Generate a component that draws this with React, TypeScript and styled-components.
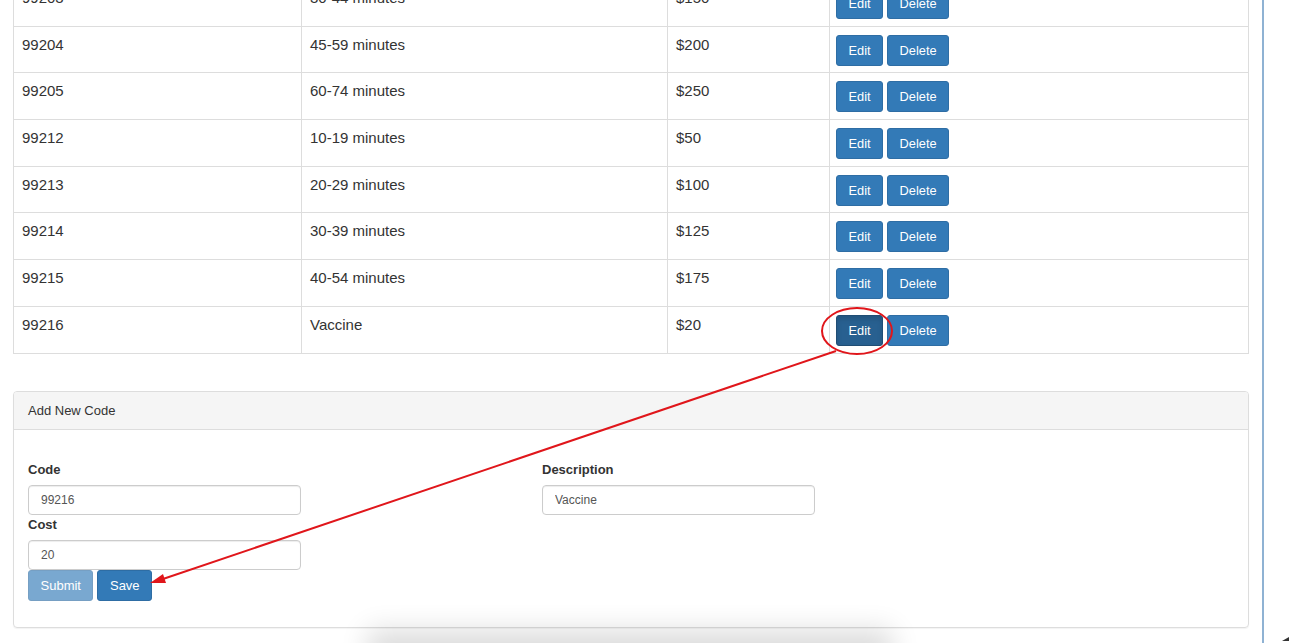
import React from "react";
import styled, { createGlobalStyle } from "styled-components";

const Global = createGlobalStyle`
  html, body { margin: 0; padding: 0; background: #fff; }
  body { font-family: "Liberation Sans", Arial, sans-serif; color: #333; }
  * { box-sizing: border-box; }
`;

const Page = styled.div`
  position: relative;
  width: 1289px;
  height: 643px;
  overflow: hidden;
  display: flex;
  align-items: flex-start;
`;

const Main = styled.div`
  width: 1236px;
  margin-left: 13px;
  margin-top: -21px;
  display: flex;
  flex-direction: column;
  gap: 37px;
`;

const SideRule = styled.div`
  width: 2px;
  height: 643px;
  margin-left: 13px;
  background: #8fb2d3;
`;

const Table = styled.table`
  width: 100%;
  border-collapse: collapse;
  table-layout: fixed;
  font-size: 15px;
`;

const Td = styled.td<{ $w?: number }>`
  border: 1px solid #ddd;
  height: 46.7px;
  padding: 8px 8px 0;
  vertical-align: top;
  line-height: 20px;
  width: ${(p) => (p.$w ? `${p.$w}px` : "auto")};
`;

const Actions = styled.div`
  display: flex;
  gap: 4px;
  margin-left: -2px;
`;

const Btn = styled.button<{ $active?: boolean; $disabled?: boolean; $size?: "sm" | "md" }>`
  font-family: "Liberation Sans", Arial, sans-serif;
  font-size: ${(p) => (p.$size === "md" ? "13px" : "12.8px")};
  height: 31px;
  padding: 0 ${(p) => (p.$size === "md" ? "11.5px" : "11.5px")};
  color: #fff;
  border-radius: 3px;
  border: 1px solid ${(p) => (p.$active ? "#204d74" : "#2e6da4")};
  background: ${(p) => (p.$active ? "#286090" : "#337ab7")};
  box-shadow: ${(p) => (p.$active ? "inset 0 3px 5px rgba(0,0,0,.125)" : "none")};
  opacity: ${(p) => (p.$disabled ? 0.65 : 1)};
  cursor: pointer;
`;

const Panel = styled.div`
  border: 1px solid #ddd;
  border-radius: 4px;
  box-shadow: 0 1px 1px rgba(0, 0, 0, 0.05);
  overflow: hidden;
`;

const PanelHeading = styled.div`
  height: 38px;
  background: #f5f5f5;
  border-bottom: 1px solid #ddd;
  padding: 0 14px;
  display: flex;
  align-items: center;
  font-size: 13px;
  color: #333;
`;

const PanelBody = styled.div`
  padding: 32px 14px 26px;
  display: grid;
  grid-template-columns: 514px 1fr;
`;

const Field = styled.div<{ $gapTop?: number }>`
  display: flex;
  flex-direction: column;
  margin-top: ${(p) => p.$gapTop ?? 0}px;
`;

const Label = styled.label`
  font-weight: bold;
  font-size: 13px;
  line-height: 16px;
  margin-bottom: 7px;
`;

const Input = styled.input`
  width: 273px;
  height: 30px;
  border: 1px solid #ccc;
  border-radius: 4px;
  padding: 0 12px;
  font-family: "Liberation Sans", Arial, sans-serif;
  font-size: 12px;
  color: #555;
  box-shadow: inset 0 1px 1px rgba(0, 0, 0, 0.075);
  outline: none;
`;

const ButtonRow = styled.div`
  display: flex;
  gap: 4px;
`;

const Overlay = styled.svg`
  position: absolute;
  left: 0;
  top: 0;
  pointer-events: none;
`;

const BottomShadow = styled.div`
  position: absolute;
  left: 380px;
  top: 648px;
  width: 500px;
  height: 40px;
  background: #e2e2e2;
  box-shadow: 0 -6px 28px 12px rgba(0, 0, 0, 0.14);
`;

const rows = [
  { code: "99203", desc: "30-44 minutes", cost: "$150" },
  { code: "99204", desc: "45-59 minutes", cost: "$200" },
  { code: "99205", desc: "60-74 minutes", cost: "$250" },
  { code: "99212", desc: "10-19 minutes", cost: "$50" },
  { code: "99213", desc: "20-29 minutes", cost: "$100" },
  { code: "99214", desc: "30-39 minutes", cost: "$125" },
  { code: "99215", desc: "40-54 minutes", cost: "$175" },
  { code: "99216", desc: "Vaccine", cost: "$20" },
];

export default function App() {
  return (
    <>
      <Global />
      <Page>
        <Main>
          <Table>
            <tbody>
              {rows.map((r, i) => (
                <tr key={r.code}>
                  <Td $w={288}>{r.code}</Td>
                  <Td $w={366}>{r.desc}</Td>
                  <Td $w={162}>{r.cost}</Td>
                  <Td>
                    <Actions>
                      <Btn $active={i === rows.length - 1}>Edit</Btn>
                      <Btn>Delete</Btn>
                    </Actions>
                  </Td>
                </tr>
              ))}
            </tbody>
          </Table>
          <Panel>
            <PanelHeading>Add New Code</PanelHeading>
            <PanelBody>
              <div>
                <Field>
                  <Label>Code</Label>
                  <Input defaultValue="99216" />
                </Field>
                <Field $gapTop={2}>
                  <Label>Cost</Label>
                  <Input defaultValue="20" />
                </Field>
                <ButtonRow>
                  <Btn $size="md" $disabled>Submit</Btn>
                  <Btn $size="md">Save</Btn>
                </ButtonRow>
              </div>
              <div>
                <Field>
                  <Label>Description</Label>
                  <Input defaultValue="Vaccine" />
                </Field>
              </div>
            </PanelBody>
          </Panel>
        </Main>
        <SideRule />
        <BottomShadow />
        <Overlay width="1289" height="643" viewBox="0 0 1289 643">
          <ellipse cx="857" cy="331" rx="35" ry="23" fill="none" stroke="#e0161b" strokeWidth="2" />
          <line x1="836" y1="351" x2="160" y2="580" stroke="#e0161b" strokeWidth="2" />
          <polygon points="150,583 163,574 166,583" fill="#e0161b" />
          <polygon points="1289,637 1289,641 1282,641" fill="#333" />
        </Overlay>
      </Page>
    </>
  );
}
